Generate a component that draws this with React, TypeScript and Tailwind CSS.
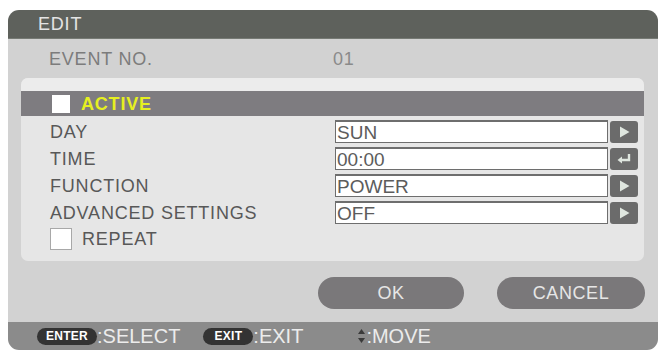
import React from "react";

const font = { fontFamily: '"Liberation Sans", Arial, sans-serif' };

function Arrow() {
  return (
    <svg width="13" height="14" viewBox="0 0 13 14">
      <path d="M2 1.5 L11.5 7 L2 12.5 Z" fill="#dfe6df" />
    </svg>
  );
}

function EnterIcon() {
  return (
    <svg width="16" height="12" viewBox="0 0 16 12">
      <path d="M13 1 V7 H5" stroke="#dfe6df" strokeWidth="2.4" fill="none" />
      <path d="M1.5 7 L6 3.5 V10.5 Z" fill="#dfe6df" />
    </svg>
  );
}

function FieldRow({ label, value, icon }: { label: string; value: string; icon: "arrow" | "enter" }) {
  return (
    <div className="flex items-center h-[27px]">
      <div className="w-[314px] pl-[29px] text-[18px] leading-none tracking-[0.8px] text-[#585858]">
        {label}
      </div>
      <div className="w-[273px] h-[23px] bg-white border border-[#6e6e6e] border-t-2 flex items-center pl-[1px] text-[19px] leading-none text-[#5c5c5c]">
        {value}
      </div>
      <div className="ml-[2px] w-[28px] h-[22px] rounded-[3px] bg-[#6b6b6b] flex items-center justify-center">
        {icon === "arrow" ? <Arrow /> : <EnterIcon />}
      </div>
    </div>
  );
}

function Key({ label, w }: { label: string; w: string }) {
  return (
    <div
      className={`${w} h-[17px] rounded-full bg-[#333333] flex items-center justify-center text-[12px] font-bold leading-none tracking-[0.3px] text-white`}
    >
      {label}
    </div>
  );
}

export default function App() {
  const rows = [
    { label: "DAY", value: "SUN", icon: "arrow" as const },
    { label: "TIME", value: "00:00", icon: "enter" as const },
    { label: "FUNCTION", value: "POWER", icon: "arrow" as const },
    { label: "ADVANCED SETTINGS", value: "OFF", icon: "arrow" as const },
  ];

  return (
    <div className="w-[662px] h-[351px] bg-white pt-[10px] pl-[8px]" style={font}>
      <div className="w-[650px] h-[340px] rounded-[11px] overflow-hidden flex flex-col">
        {/* title */}
        <div className="h-[29px] bg-[#5e615c] border-b border-[#767a74] flex items-center pl-[30px] text-[18px] leading-none tracking-[0.8px] text-[#e4e4e4]">
          EDIT
        </div>

        <div className="flex-1 bg-[#d2d2d2] flex flex-col">
          <div className="h-[39px] flex items-center text-[18px] leading-none tracking-[0.8px] text-[#7c7c7c]">
            <span className="w-[325px] pl-[41px]">EVENT NO.</span>
            <span className="text-[#8a8a8a]">01</span>
          </div>

          <div className="ml-[13px] w-[623px] h-[183px] bg-[#e6e6e6] rounded-[7px] flex flex-col">
            <div className="h-[13px] bg-[#ececec] rounded-t-[7px]" />
            <div className="h-[25px] bg-[#7e7c80] flex items-center pl-[31px]">
              <div className="w-[18px] h-[18px] bg-white" />
              <span className="ml-[11px] text-[18px] font-bold leading-none tracking-[0.8px] text-[#e6f020]">
                ACTIVE
              </span>
            </div>
            <div className="h-[2px]" />
            {rows.map((r) => (
              <FieldRow key={r.label} label={r.label} value={r.value} icon={r.icon} />
            ))}
            <div className="h-[25px] flex items-center pl-[29px]">
              <div className="w-[22px] h-[22px] bg-white border border-[#a8a8a8]" />
              <span className="ml-[10px] text-[18px] leading-none tracking-[0.8px] text-[#585858]">
                REPEAT
              </span>
            </div>
          </div>

          <div className="mt-[16px] flex h-[32px]">
            <div className="ml-[310px] w-[146px] rounded-full bg-[#7a787a] flex items-center justify-center text-[18px] leading-none tracking-[0.6px] text-[#e6e6e6]">
              OK
            </div>
            <div className="ml-[33px] w-[148px] rounded-full bg-[#7a787a] flex items-center justify-center text-[18px] leading-none tracking-[0.6px] text-[#e6e6e6]">
              CANCEL
            </div>
          </div>
        </div>

        {/* footer */}
        <div className="h-[28px] bg-[#8b8b8b] flex items-center pl-[29px] text-[20px] leading-none text-[#ececec]">
          <Key label="ENTER" w="w-[60px]" />
          <span>:SELECT</span>
          <div className="ml-[23px]">
            <Key label="EXIT" w="w-[50px]" />
          </div>
          <span>:EXIT</span>
          <svg className="ml-[54px]" width="9" height="16" viewBox="0 0 9 16">
            <path d="M4.5 1 L8 6 H1 Z" fill="#3a3a3a" />
            <path d="M4.5 15 L8 10 H1 Z" fill="#3a3a3a" />
          </svg>
          <span>:MOVE</span>
        </div>
      </div>
    </div>
  );
}
